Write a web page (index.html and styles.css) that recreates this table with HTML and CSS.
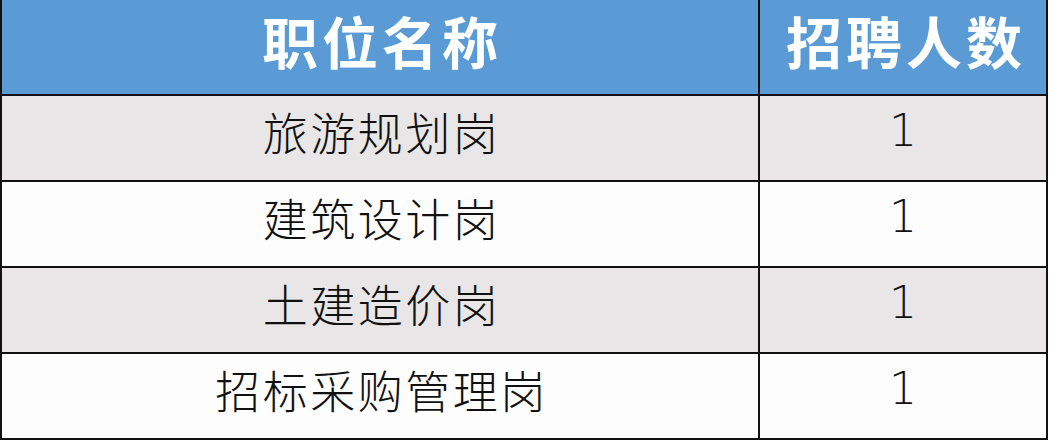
FILE: index.html
```html
<!DOCTYPE html>
<html lang="zh-CN">
<head>
<meta charset="utf-8">
<link rel="stylesheet" href="styles.css">
</head>
<body>
<div class="table">
  <div class="cell head left">职位名称</div>
  <div class="cell head right">招聘人数</div>
  <div class="cell row gray left">旅游规划岗</div>
  <div class="cell row gray right num">1</div>
  <div class="cell row left">建筑设计岗</div>
  <div class="cell row right num">1</div>
  <div class="cell row gray left">土建造价岗</div>
  <div class="cell row gray right num">1</div>
  <div class="cell row left">招标采购管理岗</div>
  <div class="cell row right num">1</div>
</div>
</body>
</html>
```
FILE: styles.css
```css
html, body {
  margin: 0;
  padding: 0;
  background: #ffffff;
}
.table {
  display: grid;
  grid-template-columns: 758px 286px;
  width: 1044px;
  border-left: 2px solid #111;
  border-right: 2px solid #111;
  border-bottom: 2px solid #111;
}
.cell {
  display: flex;
  align-items: center;
  justify-content: center;
  box-sizing: border-box;
  line-height: 1;
}
.left {
  border-right: 2px solid #111;
}
.head {
  height: 94px;
  background: #5b9bd5;
  color: #ffffff;
  font-family: "Noto Sans CJK SC", "Noto Sans", sans-serif;
  font-weight: 700;
  font-size: 56px;
  letter-spacing: 4px;
  padding-bottom: 14px;
}
.head.left { padding-left: 4px; }
.head.right { padding-left: 6px; }
.row {
  height: 86px;
  border-top: 2px solid #111;
  background: #fdfdfd;
  color: #111;
  font-family: "Noto Sans CJK SC", "Noto Sans", sans-serif;
  font-weight: 300;
  font-size: 45px;
  letter-spacing: 2.5px;
  padding-bottom: 14px;
}
.row.left { padding-left: 3px; }
.row.gray {
  background: #e8e6e6;
}
.num {
  font-family: "DejaVu Sans", "Noto Sans", sans-serif;
  font-weight: 200;
  font-size: 44px;
  letter-spacing: 0;
}
```
